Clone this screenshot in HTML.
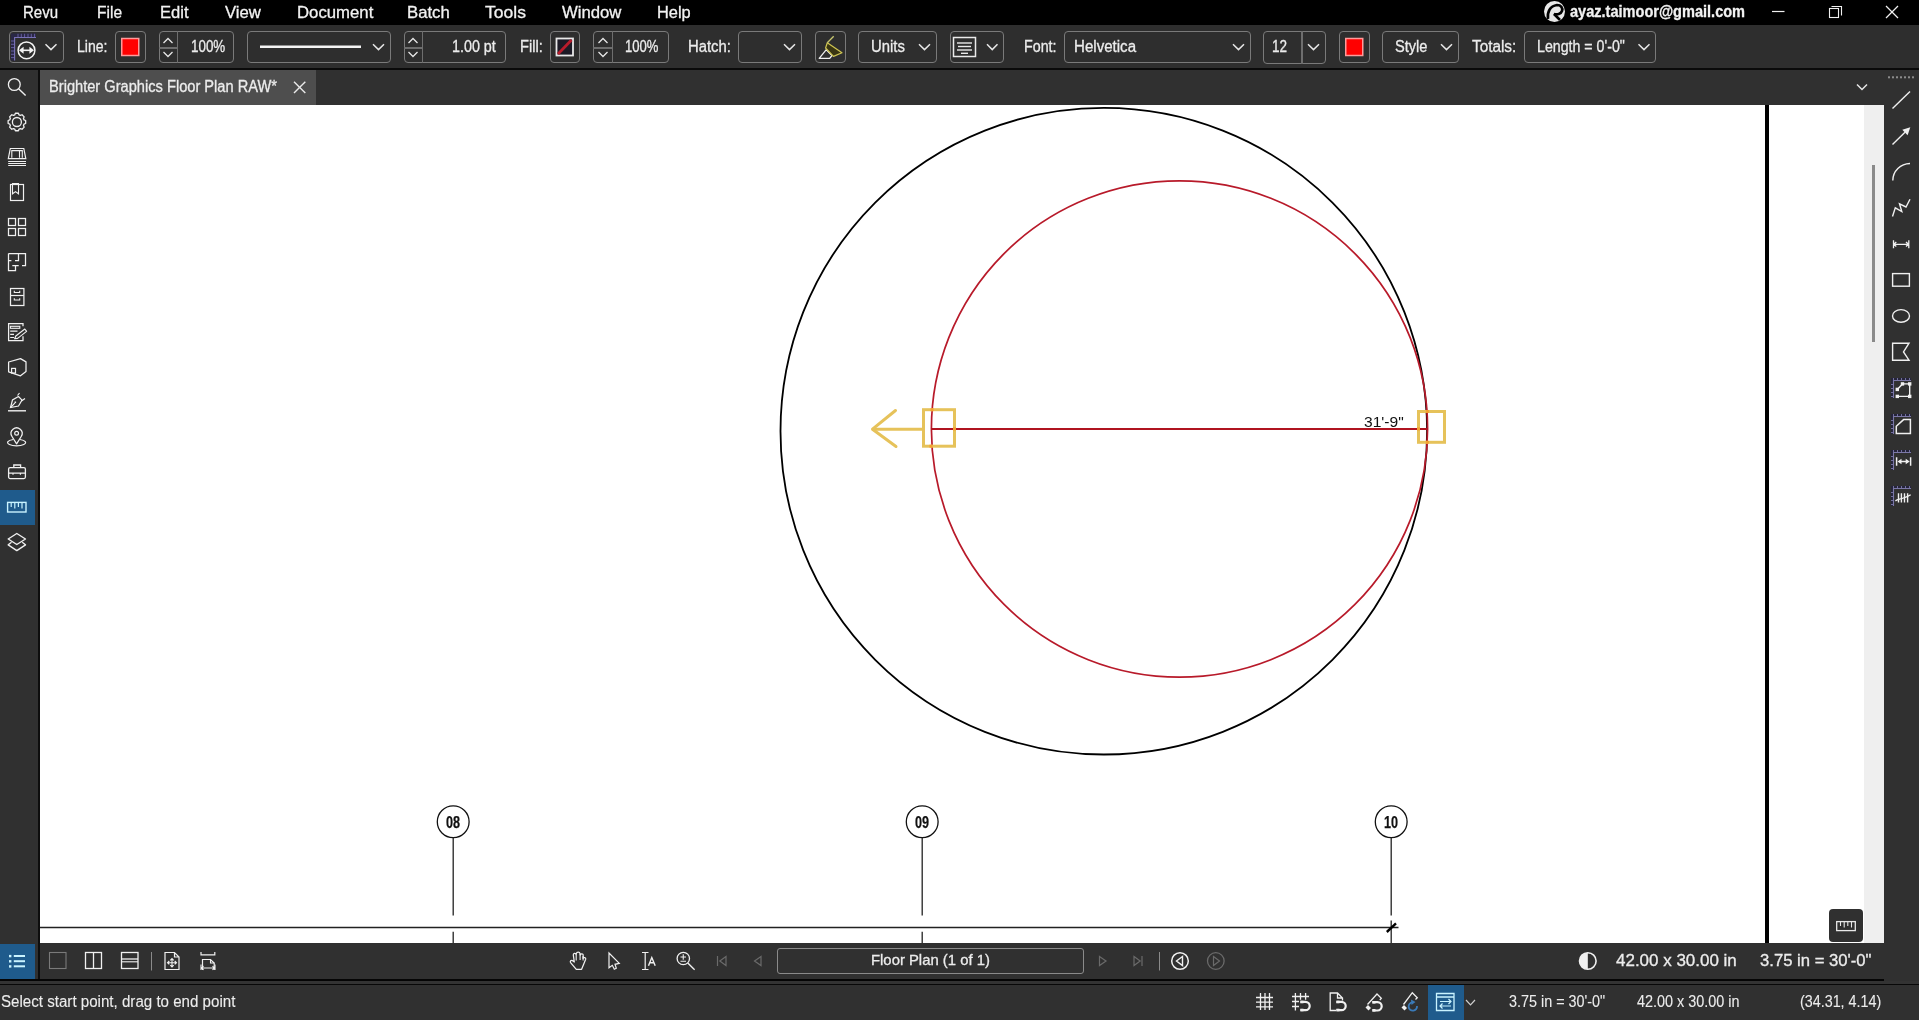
<!DOCTYPE html>
<html><head><meta charset="utf-8"><style>
html,body{margin:0;padding:0;}
body{width:1919px;height:1020px;overflow:hidden;position:relative;background:#2d2d2d;font-family:"Liberation Sans",sans-serif;}
.r,.t,.box,.s{position:absolute;}
.t{white-space:nowrap;transform-origin:0 0;-webkit-text-stroke:0.3px currentColor;}
.box{box-sizing:border-box;border:1.5px solid #7a7a7a;border-radius:4px;}
.s{overflow:visible;}
</style></head><body>
<div class="r" style="left:0px;top:0px;width:1919px;height:25px;background:#000;"></div>
<div class="r" style="left:0px;top:25px;width:1919px;height:43px;background:#2e2e2e;"></div>
<div class="r" style="left:0px;top:68px;width:1919px;height:2px;background:#0a0a0a;"></div>
<div class="r" style="left:0px;top:70px;width:38px;height:915px;background:#303030;"></div>
<div class="r" style="left:38px;top:70px;width:2px;height:909px;background:#0d0d0d;"></div>
<div class="r" style="left:40px;top:70px;width:1844px;height:35px;background:#303030;"></div>
<div class="r" style="left:40px;top:70px;width:276px;height:34.6px;background:#4e4e4e;"></div>
<div class="r" style="left:40px;top:105px;width:1844px;height:838px;background:#ffffff;"></div>
<div class="r" style="left:1864px;top:105px;width:20px;height:838px;background:#efefef;"></div>
<div class="r" style="left:1872px;top:165px;width:3px;height:177px;background:#8a8a8a;"></div>
<div class="r" style="left:1765px;top:105px;width:4px;height:838px;background:#000;"></div>
<div class="r" style="left:1884px;top:70px;width:35px;height:915px;background:#303030;"></div>
<div class="r" style="left:40px;top:943px;width:1844px;height:36px;background:#303030;"></div>
<div class="r" style="left:0px;top:979px;width:1884px;height:2px;background:#050505;"></div>
<div class="r" style="left:0px;top:981px;width:1919px;height:3px;background:#333333;"></div>
<div class="r" style="left:0px;top:984px;width:1919px;height:1px;background:#080808;"></div>
<div class="r" style="left:0px;top:985px;width:1919px;height:35px;background:#303030;"></div>
<div class="t" style="left:23.40px;top:4.00px;font-size:17px;line-height:17px;color:#f2f2f2;transform:scaleX(0.8830) translateZ(0);">Revu</div>
<div class="t" style="left:96.60px;top:4.00px;font-size:17px;line-height:17px;color:#f2f2f2;transform:scaleX(0.9132) translateZ(0);">File</div>
<div class="t" style="left:159.50px;top:4.00px;font-size:17px;line-height:17px;color:#f2f2f2;transform:scaleX(0.9744) translateZ(0);">Edit</div>
<div class="t" style="left:225.00px;top:4.00px;font-size:17px;line-height:17px;color:#f2f2f2;transform:scaleX(0.9829) translateZ(0);">View</div>
<div class="t" style="left:296.50px;top:4.00px;font-size:17px;line-height:17px;color:#f2f2f2;transform:scaleX(0.9845) translateZ(0);">Document</div>
<div class="t" style="left:406.60px;top:4.00px;font-size:17px;line-height:17px;color:#f2f2f2;transform:scaleX(0.9839) translateZ(0);">Batch</div>
<div class="t" style="left:485.25px;top:4.00px;font-size:17px;line-height:17px;color:#f2f2f2;transform:scaleX(1.0314) translateZ(0);">Tools</div>
<div class="t" style="left:561.90px;top:4.00px;font-size:17px;line-height:17px;color:#f2f2f2;transform:scaleX(0.9831) translateZ(0);">Window</div>
<div class="t" style="left:656.50px;top:4.00px;font-size:17px;line-height:17px;color:#f2f2f2;transform:scaleX(0.9643) translateZ(0);">Help</div>
<div class="t" style="left:1570.00px;top:4.00px;font-size:16px;line-height:16px;font-weight:bold;color:#f2f2f2;transform:scaleX(0.9091) translateZ(0);">ayaz.taimoor@gmail.com</div>
<svg class="s" style="left:1540px;top:0px;" width="28" height="25" viewBox="1540 0 28 25"><circle cx="1554.5" cy="11.5" r="10.5" fill="#e8e8e8"/><path d="M1548 19 C1547 12 1550 6 1557 5 C1561 5 1563 8 1562 11 C1561 14 1557 15 1554 14 L1560 20" fill="none" stroke="#000" stroke-width="2.6"/></svg>
<svg class="s" style="left:1765px;top:0px;" width="154" height="25" viewBox="1765 0 154 25"><line x1="1772" y1="11.5" x2="1784.5" y2="11.5" stroke="#f0f0f0" stroke-width="1.2"/><rect x="1829.5" y="8.5" width="9" height="9" fill="none" stroke="#f0f0f0" stroke-width="1.1"/><polyline points="1831.5,6.5 1841.5,6.5 1841.5,15.5" fill="none" stroke="#f0f0f0" stroke-width="1.1"/><line x1="1886" y1="6" x2="1898" y2="18" stroke="#f0f0f0" stroke-width="1.3"/><line x1="1898" y1="6" x2="1886" y2="18" stroke="#f0f0f0" stroke-width="1.3"/></svg>
<div class="box" style="left:9px;top:31px;width:55px;height:32px;"></div>
<div class="box" style="left:114.5px;top:31px;width:31.0px;height:32px;"></div>
<div class="box" style="left:158.5px;top:31px;width:75.5px;height:32px;"></div>
<div class="box" style="left:247px;top:31px;width:144px;height:32px;"></div>
<div class="box" style="left:403.5px;top:31px;width:102.5px;height:32px;"></div>
<div class="box" style="left:549.5px;top:31px;width:30.5px;height:32px;"></div>
<div class="box" style="left:593px;top:31px;width:76px;height:32px;"></div>
<div class="box" style="left:738px;top:31px;width:64px;height:32px;"></div>
<div class="box" style="left:814.5px;top:31px;width:31.5px;height:32px;"></div>
<div class="box" style="left:858px;top:31px;width:78.5px;height:32px;"></div>
<div class="box" style="left:949.5px;top:31px;width:54.5px;height:32px;"></div>
<div class="box" style="left:1063.5px;top:31px;width:187.5px;height:32px;"></div>
<div class="box" style="left:1338.5px;top:31px;width:31.0px;height:32px;"></div>
<div class="box" style="left:1382px;top:31px;width:77px;height:32px;"></div>
<div class="box" style="left:1524px;top:31px;width:132px;height:32px;"></div>
<div class="box" style="left:1263px;top:30.5px;width:63px;height:33.0px;"></div>
<div class="r" style="left:176.75px;top:31px;width:1.5px;height:32px;background:#6e6e6e;"></div>
<div class="r" style="left:158.5px;top:47px;width:19.0px;height:1.5px;background:#6e6e6e;"></div>
<div class="r" style="left:421.75px;top:31px;width:1.5px;height:32px;background:#6e6e6e;"></div>
<div class="r" style="left:403.5px;top:47px;width:19.0px;height:1.5px;background:#6e6e6e;"></div>
<div class="r" style="left:611.75px;top:31px;width:1.5px;height:32px;background:#6e6e6e;"></div>
<div class="r" style="left:593px;top:47px;width:19.5px;height:1.5px;background:#6e6e6e;"></div>
<div class="r" style="left:1301.25px;top:30.5px;width:1.5px;height:33px;background:#6e6e6e;"></div>
<svg class="s" style="left:0px;top:25px;" width="1700" height="44" viewBox="0 25 1700 44"><polyline points="163.5,43 168.0,38.5 172.5,43" fill="none" stroke="#e6e6e6" stroke-width="1.3"/><polyline points="163.5,52 168.0,56.5 172.5,52" fill="none" stroke="#e6e6e6" stroke-width="1.3"/><polyline points="408.5,43 413.0,38.5 417.5,43" fill="none" stroke="#e6e6e6" stroke-width="1.3"/><polyline points="408.5,52 413.0,56.5 417.5,52" fill="none" stroke="#e6e6e6" stroke-width="1.3"/><polyline points="598.5,43 603.0,38.5 607.5,43" fill="none" stroke="#e6e6e6" stroke-width="1.3"/><polyline points="598.5,52 603.0,56.5 607.5,52" fill="none" stroke="#e6e6e6" stroke-width="1.3"/><polyline points="45.5,44.3 51.0,49.6 56.5,44.3" fill="none" stroke="#e6e6e6" stroke-width="1.5"/><polyline points="373,44.3 378.5,49.6 384,44.3" fill="none" stroke="#e6e6e6" stroke-width="1.5"/><polyline points="784,44.3 789.5,49.6 795,44.3" fill="none" stroke="#e6e6e6" stroke-width="1.5"/><polyline points="919,44.3 924.5,49.6 930,44.3" fill="none" stroke="#e6e6e6" stroke-width="1.5"/><polyline points="987,44.3 992.25,49.6 997.5,44.3" fill="none" stroke="#e6e6e6" stroke-width="1.5"/><polyline points="1233,44.3 1238.5,49.6 1244,44.3" fill="none" stroke="#e6e6e6" stroke-width="1.5"/><polyline points="1308,44.3 1313.5,49.6 1319,44.3" fill="none" stroke="#e6e6e6" stroke-width="1.5"/><polyline points="1441,44.3 1446.5,49.6 1452,44.3" fill="none" stroke="#e6e6e6" stroke-width="1.5"/><polyline points="1638.5,44.3 1644.0,49.6 1649.5,44.3" fill="none" stroke="#e6e6e6" stroke-width="1.5"/><line x1="260" y1="46.8" x2="361" y2="46.8" stroke="#f4f4f4" stroke-width="2.6"/><rect x="121.75" y="38.5" width="17" height="17" fill="#ff0000" stroke="#ff9a9a" stroke-width="1.5"/><rect x="1345.75" y="38.5" width="17" height="17" fill="#ff0000" stroke="#ff9a9a" stroke-width="1.5"/><rect x="556.5" y="38.5" width="16.5" height="17" fill="#1c1a26" stroke="#e8e8e8" stroke-width="1.8"/><line x1="558" y1="54" x2="571.5" y2="40" stroke="#b81c2c" stroke-width="2.8"/><rect x="953.5" y="37.5" width="22" height="19" fill="none" stroke="#eaeaea" stroke-width="1.5"/><line x1="957" y1="43" x2="972" y2="43" stroke="#eaeaea" stroke-width="1.4"/><line x1="958" y1="46.5" x2="971" y2="46.5" stroke="#eaeaea" stroke-width="1.4"/><line x1="957" y1="50" x2="972" y2="50" stroke="#eaeaea" stroke-width="1.4"/><line x1="961" y1="53.3" x2="968" y2="53.3" stroke="#eaeaea" stroke-width="1.4"/><path d="M819.2 58.3 L826.3 49.7 L832 55.5 L829.7 58.3 Z" fill="none" stroke="#f0f0f0" stroke-width="1.3" stroke-linejoin="round"/><path d="M827.3 42.7 L842 52.7 L833.5 56.4 L825.6 48 Z" fill="#3a3612" stroke="#cfc552" stroke-width="1.2" stroke-linejoin="round"/><line x1="827.3" y1="42.7" x2="833.7" y2="36.3" stroke="#c8c870" stroke-width="1.3"/><path d="M11 33.5 H36 V37.5 H14.6 V60.5 H11 Z" fill="#2a2846"/><line x1="18" y1="33.8" x2="18" y2="37.5" stroke="#6a62a8" stroke-width="0.9"/><line x1="21.3" y1="33.8" x2="21.3" y2="37.5" stroke="#6a62a8" stroke-width="0.9"/><line x1="24.6" y1="33.8" x2="24.6" y2="37.5" stroke="#6a62a8" stroke-width="0.9"/><line x1="28" y1="33.8" x2="28" y2="37.5" stroke="#6a62a8" stroke-width="0.9"/><line x1="31.3" y1="33.8" x2="31.3" y2="37.5" stroke="#6a62a8" stroke-width="0.9"/><line x1="34.6" y1="33.8" x2="34.6" y2="37.5" stroke="#6a62a8" stroke-width="0.9"/><line x1="11" y1="41" x2="14.6" y2="41" stroke="#6a62a8" stroke-width="0.9"/><line x1="11" y1="44.3" x2="14.6" y2="44.3" stroke="#6a62a8" stroke-width="0.9"/><line x1="11" y1="47.6" x2="14.6" y2="47.6" stroke="#6a62a8" stroke-width="0.9"/><line x1="11" y1="51" x2="14.6" y2="51" stroke="#6a62a8" stroke-width="0.9"/><line x1="11" y1="54.3" x2="14.6" y2="54.3" stroke="#6a62a8" stroke-width="0.9"/><line x1="11" y1="57.6" x2="14.6" y2="57.6" stroke="#6a62a8" stroke-width="0.9"/><polyline points="14.6,60.5 14.6,37.5 36,37.5" fill="none" stroke="#7a72b8" stroke-width="1.1"/><circle cx="26.5" cy="50.3" r="8.4" fill="none" stroke="#f4f4f4" stroke-width="1.5"/><line x1="21" y1="50.3" x2="32" y2="50.3" stroke="#f4f4f4" stroke-width="1.6"/><path d="M19 50.3 L23.6 46.8 L23.6 53.8 Z M34 50.3 L29.4 46.8 L29.4 53.8 Z" fill="#f4f4f4"/></svg>
<div class="t" style="left:76.70px;top:39.00px;font-size:16px;line-height:16px;color:#ececec;transform:scaleX(0.8777) translateZ(0);">Line:</div>
<div class="t" style="left:190.50px;top:39.00px;font-size:16px;line-height:16px;color:#ececec;transform:scaleX(0.8367) translateZ(0);">100%</div>
<div class="t" style="left:452.00px;top:39.00px;font-size:16px;line-height:16px;color:#ececec;transform:scaleX(0.8941) translateZ(0);">1.00 pt</div>
<div class="t" style="left:519.60px;top:39.00px;font-size:16px;line-height:16px;color:#ececec;transform:scaleX(0.9126) translateZ(0);">Fill:</div>
<div class="t" style="left:625.00px;top:39.00px;font-size:16px;line-height:16px;color:#ececec;transform:scaleX(0.8171) translateZ(0);">100%</div>
<div class="t" style="left:688.40px;top:39.00px;font-size:16px;line-height:16px;color:#ececec;transform:scaleX(0.9276) translateZ(0);">Hatch:</div>
<div class="t" style="left:871.40px;top:39.00px;font-size:16px;line-height:16px;color:#ececec;transform:scaleX(0.9288) translateZ(0);">Units</div>
<div class="t" style="left:1023.70px;top:39.00px;font-size:16px;line-height:16px;color:#ececec;transform:scaleX(0.8904) translateZ(0);">Font:</div>
<div class="t" style="left:1073.60px;top:39.00px;font-size:16px;line-height:16px;color:#ececec;transform:scaleX(0.9427) translateZ(0);">Helvetica</div>
<div class="t" style="left:1272.00px;top:39.00px;font-size:16px;line-height:16px;color:#ececec;transform:scaleX(0.8451) translateZ(0);">12</div>
<div class="t" style="left:1395.30px;top:39.00px;font-size:16px;line-height:16px;color:#ececec;transform:scaleX(0.9123) translateZ(0);">Style</div>
<div class="t" style="left:1472.00px;top:39.00px;font-size:16px;line-height:16px;color:#ececec;transform:scaleX(0.9578) translateZ(0);">Totals:</div>
<div class="t" style="left:1536.60px;top:39.00px;font-size:16px;line-height:16px;color:#ececec;transform:scaleX(0.8869) translateZ(0);">Length = 0'-0&quot;</div>
<div class="t" style="left:49.00px;top:79.00px;font-size:16px;line-height:16px;color:#ececec;transform:scaleX(0.9147) translateZ(0);">Brighter Graphics Floor Plan RAW*</div>
<svg class="s" style="left:290px;top:78px;" width="20" height="20" viewBox="290 78 20 20"><line x1="294" y1="81.7" x2="305.3" y2="93" stroke="#eaeaea" stroke-width="1.4"/><line x1="305.3" y1="81.7" x2="294" y2="93" stroke="#eaeaea" stroke-width="1.4"/></svg>
<svg class="s" style="left:1850px;top:78px;" width="30" height="20" viewBox="1850 78 30 20"><polyline points="1857,84.5 1862.0,89.5 1867,84.5" fill="none" stroke="#e6e6e6" stroke-width="1.5"/></svg>
<svg class="s" style="left:1884px;top:70px;" width="35" height="15" viewBox="1884 70 35 15"><rect x="1888" y="76.3" width="2" height="2" fill="#8c8c8c"/><rect x="1892" y="76.3" width="2" height="2" fill="#8c8c8c"/><rect x="1896" y="76.3" width="2" height="2" fill="#8c8c8c"/><rect x="1900" y="76.3" width="2" height="2" fill="#8c8c8c"/><rect x="1904" y="76.3" width="2" height="2" fill="#8c8c8c"/><rect x="1908" y="76.3" width="2" height="2" fill="#8c8c8c"/><rect x="1912" y="76.3" width="2" height="2" fill="#8c8c8c"/></svg>
<div class="r" style="left:0px;top:490px;width:35px;height:35px;background:#1f5b8c;"></div>
<div class="r" style="left:0px;top:944px;width:35px;height:35px;background:#1f5b8c;"></div>
<svg class="s" style="left:0px;top:70px;" width="38" height="500" viewBox="0 70 38 500"><circle cx="14.3" cy="84.5" r="5.9" fill="none" stroke="#f0f0f0" stroke-width="1.3"/><line x1="18.6" y1="88.8" x2="25.6" y2="95.6" stroke="#f0f0f0" stroke-width="1.4"/><polygon points="14.71,114.93 15.39,113.23 18.41,113.23 19.09,114.93 20.35,115.45 22.04,114.73 24.17,116.86 23.45,118.55 23.97,119.81 25.67,120.49 25.67,123.51 23.97,124.19 23.45,125.45 24.17,127.14 22.04,129.27 20.35,128.55 19.09,129.07 18.41,130.77 15.39,130.77 14.71,129.07 13.45,128.55 11.76,129.27 9.63,127.14 10.35,125.45 9.83,124.19 8.13,123.51 8.13,120.49 9.83,119.81 10.35,118.55 9.63,116.86 11.76,114.73 13.45,115.45" fill="none" stroke="#f0f0f0" stroke-width="1.3" stroke-linejoin="round"/><circle cx="16.9" cy="122" r="4.5" fill="none" stroke="#f0f0f0" stroke-width="1.3"/><path d="M10.3 148.5 L23.8 148.5 L25.8 158.7 L8.3 158.7 Z" fill="none" stroke="#f0f0f0" stroke-width="1.2"/><path d="M11.8 157.8 L11.8 150.6 L22.3 150.6 L22.3 157.8 M19.5 150.6 L19.5 157.8" fill="none" stroke="#f0f0f0" stroke-width="1.1"/><path d="M8.2 161.5 H26 M8.2 163.5 H26 M8.2 165.5 H26" fill="none" stroke="#f0f0f0" stroke-width="1.0"/><rect x="10.5" y="184.5" width="13" height="16" fill="none" stroke="#f0f0f0" stroke-width="1.2"/><path d="M12.5 183.6 H18.5 V193.8 L15.5 191.6 L12.5 193.8 Z" fill="none" stroke="#f0f0f0" stroke-width="1.1"/><rect x="8.5" y="218.5" width="7" height="7" fill="none" stroke="#f0f0f0" stroke-width="1.25"/><rect x="8.5" y="228.5" width="7" height="7" fill="none" stroke="#f0f0f0" stroke-width="1.25"/><rect x="18.5" y="218.5" width="7" height="7" fill="none" stroke="#f0f0f0" stroke-width="1.25"/><rect x="18.5" y="228.5" width="7" height="7" fill="none" stroke="#f0f0f0" stroke-width="1.25"/><path d="M8.5 253.5 H25.5 V265.5 H22 M8.5 253.5 V270.5 H15.5 V265.5 M12.3 265.5 H18.7 M8.5 260.5 H11.4 M15 260.5 H18.5 V253.5" fill="none" stroke="#f0f0f0" stroke-width="1.25"/><rect x="10.5" y="288.5" width="13.4" height="17" fill="none" stroke="#f0f0f0" stroke-width="1.25"/><line x1="10.5" y1="295.5" x2="23.9" y2="295.5" stroke="#f0f0f0" stroke-width="1.2"/><path d="M14.3 290.8 V292.5 H19.7 V290.8 M14.3 298.3 V300 H19.7 V298.3" fill="none" stroke="#f0f0f0" stroke-width="1.1"/><path d="M23 326.2 V323.6 H8.6 V340.7 H23 V336.2" fill="none" stroke="#f0f0f0" stroke-width="1.25"/><rect x="10.4" y="326.3" width="9.4" height="2" fill="none" stroke="#f0f0f0" stroke-width="1.1"/><path d="M10.2 331.2 H17.5 M10.2 334.4 H14 M10.2 337.5 H14" fill="none" stroke="#f0f0f0" stroke-width="1.2"/><path d="M14.7 338.8 L17.6 338.4 L26.6 331.4 L24.8 329 L15.8 336 Z" fill="none" stroke="#f0f0f0" stroke-width="1.15" stroke-linejoin="round"/><path d="M8.6 362 L20.5 358.6 L26 361.9 V371.5 L20.5 375.8 L8.6 371.8 Z" fill="none" stroke="#f0f0f0" stroke-width="1.25" stroke-linejoin="round"/><rect x="11.6" y="368.4" width="3.9" height="4.6" fill="none" stroke="#f0f0f0" stroke-width="1.2"/><line x1="8" y1="410.8" x2="26" y2="410.8" stroke="#f0f0f0" stroke-width="1.4"/><path d="M10.5 407.5 L12.5 400 L18.5 396.5 L22 400 L18.5 406 Z" fill="none" stroke="#f0f0f0" stroke-width="1.2"/><path d="M17.5 395.5 L19.5 393 M21.5 401 L25 398.5 M10.5 407.5 L14.8 403.2" fill="none" stroke="#f0f0f0" stroke-width="1.2"/><rect x="14.5" y="401.5" width="1.6" height="1.6" fill="#f0f0f0"/><path d="M16.6 443.8 L12.0 436.5 A5.5 5.5 0 1 1 21.2 436.5 Z" fill="none" stroke="#f0f0f0" stroke-width="1.25" stroke-linejoin="round"/><circle cx="16.6" cy="433.3" r="1.9" fill="none" stroke="#f0f0f0" stroke-width="1.2"/><path d="M13.2 439.5 A9 3.3 0 1 0 20 439.5" fill="none" stroke="#f0f0f0" stroke-width="1.2"/><path d="M13.8 467.5 V465 H20.6 V467.5" fill="none" stroke="#f0f0f0" stroke-width="1.3"/><rect x="8.6" y="467.6" width="16.8" height="11" rx="1.5" fill="none" stroke="#f0f0f0" stroke-width="1.3"/><path d="M8.6 473.2 H13 V474.8 M13 473.2 H20.4 M20.4 474.8 V473.2 H25.4" fill="none" stroke="#f0f0f0" stroke-width="1.2"/><rect x="7.6" y="502.4" width="18.4" height="9.6" fill="none" stroke="#c9f3ff" stroke-width="1.4"/><line x1="11.2" y1="502.4" x2="11.2" y2="507" stroke="#c9f3ff" stroke-width="1.2"/><line x1="14.8" y1="502.4" x2="14.8" y2="508.5" stroke="#c9f3ff" stroke-width="1.2"/><line x1="18.4" y1="502.4" x2="18.4" y2="507" stroke="#c9f3ff" stroke-width="1.2"/><line x1="22" y1="502.4" x2="22" y2="508.5" stroke="#c9f3ff" stroke-width="1.2"/><path d="M16.8 533.5 L25.5 539 L16.8 544.5 L8.2 539 Z" fill="none" stroke="#f0f0f0" stroke-width="1.4" stroke-linejoin="round"/><path d="M11.5 542.3 L8.2 544.8 L16.8 550.6 L25.5 544.8 L22.2 542.3" fill="none" stroke="#f0f0f0" stroke-width="1.4" stroke-linejoin="round"/></svg>
<svg class="s" style="left:1884px;top:70px;" width="35" height="450" viewBox="1884 70 35 450"><line x1="1892.5" y1="108.5" x2="1910" y2="91.5" fill="none" stroke="#f0f0f0" stroke-width="1.4"/><line x1="1892.5" y1="144.5" x2="1905" y2="132.3" fill="none" stroke="#f0f0f0" stroke-width="1.4"/><path d="M1910.3 127.3 L1902.3 129.8 L1907.6 135.2 Z" fill="#f0f0f0"/><path d="M1892.8 180.6 A17.5 17.2 0 0 1 1910 163.5" fill="none" stroke="#f0f0f0" stroke-width="1.4"/><polyline points="1892.5,216.5 1895.3,207.8 1901.8,211.5 1899.5,203.8 1906,207 1910,199.3" fill="none" stroke="#f0f0f0" stroke-width="1.4" stroke-linejoin="miter"/><path d="M1893.5 240.3 V248.2 M1908.8 240.3 V248.2 M1893.5 244.3 H1908.8 M1896.3 242 L1893.8 244.3 L1896.3 246.6 M1906 242 L1908.5 244.3 L1906 246.6" fill="none" stroke="#f0f0f0" stroke-width="1.3"/><rect x="1892.6" y="273.6" width="16.8" height="12.6" fill="none" stroke="#f0f0f0" stroke-width="1.4"/><ellipse cx="1901" cy="315.9" rx="8.5" ry="6.3" fill="none" stroke="#f0f0f0" stroke-width="1.4"/><path d="M1892.6 343.2 H1909 L1903.5 352 L1909 360.2 H1892.6 Z" fill="none" stroke="#f0f0f0" stroke-width="1.4" stroke-linejoin="miter"/><path d="M1891 378.0 H1911 V380.5 H1893.5 V398.0 H1891 Z" fill="#25243a"/><line x1="1893.5" y1="378.0" x2="1893.5" y2="380.5" stroke="#7c78a8" stroke-width="0.9"/><line x1="1897.5" y1="378.0" x2="1897.5" y2="380.5" stroke="#7c78a8" stroke-width="0.9"/><line x1="1901.5" y1="378.0" x2="1901.5" y2="380.5" stroke="#7c78a8" stroke-width="0.9"/><line x1="1905.5" y1="378.0" x2="1905.5" y2="380.5" stroke="#7c78a8" stroke-width="0.9"/><line x1="1909.5" y1="378.0" x2="1909.5" y2="380.5" stroke="#7c78a8" stroke-width="0.9"/><line x1="1891" y1="384.5" x2="1893.5" y2="384.5" stroke="#7c78a8" stroke-width="0.9"/><line x1="1891" y1="388.5" x2="1893.5" y2="388.5" stroke="#7c78a8" stroke-width="0.9"/><line x1="1891" y1="392.5" x2="1893.5" y2="392.5" stroke="#7c78a8" stroke-width="0.9"/><line x1="1891" y1="396.5" x2="1893.5" y2="396.5" stroke="#7c78a8" stroke-width="0.9"/><polyline points="1893.5,398.0 1893.5,380.5 1911,380.5" fill="none" stroke="#7c78a8" stroke-width="1.1"/><polyline points="1897.3,389.4 1902.5,383.9 1909.7,383.9 1909.7,396.4 1897.3,396.4" fill="none" stroke="#f0f0f0" stroke-width="1.4"/><rect x="1895.6" y="387.7" width="3.4" height="3.4" fill="#f0f0f0"/><rect x="1900.8" y="382.2" width="3.4" height="3.4" fill="#f0f0f0"/><rect x="1908.0" y="382.2" width="3.4" height="3.4" fill="#f0f0f0"/><rect x="1908.0" y="394.7" width="3.4" height="3.4" fill="#f0f0f0"/><rect x="1895.6" y="394.7" width="3.4" height="3.4" fill="#f0f0f0"/><path d="M1891 414.0 H1911 V416.5 H1893.5 V434.0 H1891 Z" fill="#25243a"/><line x1="1893.5" y1="414.0" x2="1893.5" y2="416.5" stroke="#7c78a8" stroke-width="0.9"/><line x1="1897.5" y1="414.0" x2="1897.5" y2="416.5" stroke="#7c78a8" stroke-width="0.9"/><line x1="1901.5" y1="414.0" x2="1901.5" y2="416.5" stroke="#7c78a8" stroke-width="0.9"/><line x1="1905.5" y1="414.0" x2="1905.5" y2="416.5" stroke="#7c78a8" stroke-width="0.9"/><line x1="1909.5" y1="414.0" x2="1909.5" y2="416.5" stroke="#7c78a8" stroke-width="0.9"/><line x1="1891" y1="420.5" x2="1893.5" y2="420.5" stroke="#7c78a8" stroke-width="0.9"/><line x1="1891" y1="424.5" x2="1893.5" y2="424.5" stroke="#7c78a8" stroke-width="0.9"/><line x1="1891" y1="428.5" x2="1893.5" y2="428.5" stroke="#7c78a8" stroke-width="0.9"/><line x1="1891" y1="432.5" x2="1893.5" y2="432.5" stroke="#7c78a8" stroke-width="0.9"/><polyline points="1893.5,434.0 1893.5,416.5 1911,416.5" fill="none" stroke="#7c78a8" stroke-width="1.1"/><path d="M1896.3 433.6 V426.3 L1903.6 419.6 H1910.4 V433.6 Z" fill="none" stroke="#f0f0f0" stroke-width="1.5"/><path d="M1891 450.0 H1911 V452.5 H1893.5 V470.0 H1891 Z" fill="#25243a"/><line x1="1893.5" y1="450.0" x2="1893.5" y2="452.5" stroke="#7c78a8" stroke-width="0.9"/><line x1="1897.5" y1="450.0" x2="1897.5" y2="452.5" stroke="#7c78a8" stroke-width="0.9"/><line x1="1901.5" y1="450.0" x2="1901.5" y2="452.5" stroke="#7c78a8" stroke-width="0.9"/><line x1="1905.5" y1="450.0" x2="1905.5" y2="452.5" stroke="#7c78a8" stroke-width="0.9"/><line x1="1909.5" y1="450.0" x2="1909.5" y2="452.5" stroke="#7c78a8" stroke-width="0.9"/><line x1="1891" y1="456.5" x2="1893.5" y2="456.5" stroke="#7c78a8" stroke-width="0.9"/><line x1="1891" y1="460.5" x2="1893.5" y2="460.5" stroke="#7c78a8" stroke-width="0.9"/><line x1="1891" y1="464.5" x2="1893.5" y2="464.5" stroke="#7c78a8" stroke-width="0.9"/><line x1="1891" y1="468.5" x2="1893.5" y2="468.5" stroke="#7c78a8" stroke-width="0.9"/><polyline points="1893.5,470.0 1893.5,452.5 1911,452.5" fill="none" stroke="#7c78a8" stroke-width="1.1"/><path d="M1896.6 457.2 V465.8 M1910.6 457.2 V465.8 M1899 461.5 H1908" fill="none" stroke="#f0f0f0" stroke-width="1.5"/><path d="M1897.5 461.5 L1901.5 458.8 V464.2 Z M1909.7 461.5 L1905.7 458.8 V464.2 Z" fill="#f0f0f0"/><path d="M1891 486.0 H1911 V488.5 H1893.5 V506.0 H1891 Z" fill="#25243a"/><line x1="1893.5" y1="486.0" x2="1893.5" y2="488.5" stroke="#7c78a8" stroke-width="0.9"/><line x1="1897.5" y1="486.0" x2="1897.5" y2="488.5" stroke="#7c78a8" stroke-width="0.9"/><line x1="1901.5" y1="486.0" x2="1901.5" y2="488.5" stroke="#7c78a8" stroke-width="0.9"/><line x1="1905.5" y1="486.0" x2="1905.5" y2="488.5" stroke="#7c78a8" stroke-width="0.9"/><line x1="1909.5" y1="486.0" x2="1909.5" y2="488.5" stroke="#7c78a8" stroke-width="0.9"/><line x1="1891" y1="492.5" x2="1893.5" y2="492.5" stroke="#7c78a8" stroke-width="0.9"/><line x1="1891" y1="496.5" x2="1893.5" y2="496.5" stroke="#7c78a8" stroke-width="0.9"/><line x1="1891" y1="500.5" x2="1893.5" y2="500.5" stroke="#7c78a8" stroke-width="0.9"/><line x1="1891" y1="504.5" x2="1893.5" y2="504.5" stroke="#7c78a8" stroke-width="0.9"/><polyline points="1893.5,506.0 1893.5,488.5 1911,488.5" fill="none" stroke="#7c78a8" stroke-width="1.1"/><path d="M1898.5 493.2 V502.6 M1901.4 493.2 V502.6 M1904.5 493.2 V502.6 M1907.6 493.2 V502.6" fill="none" stroke="#f0f0f0" stroke-width="1.4"/><path d="M1895.4 500.9 C1897.5 499.5 1899 499.5 1902 498.5 C1905 497.5 1908 496.5 1910.7 494.7" fill="none" stroke="#f0f0f0" stroke-width="1.3"/></svg>
<svg class="s" style="left:40px;top:105px;" width="1844" height="838" viewBox="40 105 1844 838"><circle cx="1103.8" cy="431.2" r="323.3" fill="none" stroke="#000" stroke-width="1.8"/><circle cx="1179.5" cy="429" r="248.1" fill="none" stroke="#b81a2a" stroke-width="1.7"/><line x1="931" y1="428.9" x2="1427.6" y2="428.9" stroke="#b01420" stroke-width="2"/><line x1="873" y1="429.2" x2="922" y2="429.2" stroke="#e6c25a" stroke-width="3"/><polyline points="895.5,410.5 872.5,429.2 896,446.5" fill="none" stroke="#e6c25a" stroke-width="3" stroke-linejoin="round" stroke-linecap="round"/><rect x="923.5" y="409.7" width="31" height="36.5" fill="none" stroke="#e6c25a" stroke-width="3"/><rect x="1418.5" y="411.5" width="26" height="30.8" fill="none" stroke="#e6c25a" stroke-width="3"/><rect x="930.5" y="408.2" width="3" height="3" fill="#f5a030"/><rect x="929.5" y="444.7" width="3" height="3" fill="#f5a030"/><rect x="953.0" y="427.4" width="3" height="3" fill="#f5a030"/><rect x="1417.0" y="427.4" width="3" height="3" fill="#f5a030"/><rect x="1425.8" y="410.0" width="3" height="3" fill="#f5a030"/><rect x="1425.8" y="440.8" width="3" height="3" fill="#f5a030"/><circle cx="453.2" cy="821.7" r="15.9" fill="none" stroke="#111" stroke-width="1.3"/><line x1="453.2" y1="837.6" x2="453.2" y2="915.6" stroke="#222" stroke-width="1.3"/><line x1="453.2" y1="931.8" x2="453.2" y2="943" stroke="#222" stroke-width="1.3"/><circle cx="922.2" cy="821.7" r="15.9" fill="none" stroke="#111" stroke-width="1.3"/><line x1="922.2" y1="837.6" x2="922.2" y2="915.6" stroke="#222" stroke-width="1.3"/><line x1="922.2" y1="931.8" x2="922.2" y2="943" stroke="#222" stroke-width="1.3"/><circle cx="1391.2" cy="821.7" r="15.9" fill="none" stroke="#111" stroke-width="1.3"/><line x1="1391.2" y1="837.6" x2="1391.2" y2="915.6" stroke="#222" stroke-width="1.3"/><line x1="1391.2" y1="920.4" x2="1391.2" y2="943" stroke="#222" stroke-width="1.3"/><line x1="40" y1="927.6" x2="1398.5" y2="927.6" stroke="#222" stroke-width="1.5"/><line x1="1386.8" y1="932" x2="1396" y2="923.4" stroke="#000" stroke-width="2.4"/></svg>
<div class="t" style="left:446.20px;top:815.00px;font-size:16px;line-height:16px;font-weight:bold;color:#111;transform:scaleX(0.7887) translateZ(0);-webkit-text-stroke:0.25px #111;">08</div>
<div class="t" style="left:915.20px;top:815.00px;font-size:16px;line-height:16px;font-weight:bold;color:#111;transform:scaleX(0.7887) translateZ(0);-webkit-text-stroke:0.25px #111;">09</div>
<div class="t" style="left:1384.20px;top:815.00px;font-size:16px;line-height:16px;font-weight:bold;color:#111;transform:scaleX(0.7887) translateZ(0);-webkit-text-stroke:0.25px #111;">10</div>
<div class="t" style="left:1363.50px;top:415.00px;font-size:14px;line-height:14px;color:#111;transform:scaleX(1.1144) translateZ(0);-webkit-text-stroke:0;">31'-9&quot;</div>
<div class="r" style="left:1829px;top:909px;width:34px;height:33px;background:#303030;border-radius:4px;"></div>
<svg class="s" style="left:1829px;top:909px;" width="34" height="33" viewBox="1829 909 34 33"><rect x="1836.7" y="921.6" width="18.6" height="9" fill="none" stroke="#e8e8e8" stroke-width="1.3"/><line x1="1840.5" y1="921.6" x2="1840.5" y2="926" stroke="#e8e8e8" stroke-width="1.1"/><line x1="1844.2" y1="921.6" x2="1844.2" y2="927.5" stroke="#e8e8e8" stroke-width="1.1"/><line x1="1847.8" y1="921.6" x2="1847.8" y2="926" stroke="#e8e8e8" stroke-width="1.1"/><line x1="1851.5" y1="921.6" x2="1851.5" y2="927.5" stroke="#e8e8e8" stroke-width="1.1"/></svg>
<svg class="s" style="left:0px;top:943px;" width="1884" height="36" viewBox="0 943 1884 36"><rect x="9" y="954.9" width="2.4" height="2.4" fill="#c9f3ff"/><line x1="13.8" y1="956" x2="25" y2="956" stroke="#c9f3ff" stroke-width="2"/><rect x="9" y="960.1" width="2.4" height="2.4" fill="#c9f3ff"/><line x1="13.8" y1="961.2" x2="25" y2="961.2" stroke="#c9f3ff" stroke-width="2"/><rect x="9" y="965.1999999999999" width="2.4" height="2.4" fill="#c9f3ff"/><line x1="13.8" y1="966.3" x2="25" y2="966.3" stroke="#c9f3ff" stroke-width="2"/><rect x="49.5" y="952.5" width="16.5" height="16" fill="none" stroke="#7a7a7a" stroke-width="1.1"/><rect x="85.5" y="952.5" width="16" height="16" fill="none" stroke="#f0f0f0" stroke-width="1.3"/><line x1="93.5" y1="952.5" x2="93.5" y2="968.5" stroke="#f0f0f0" stroke-width="1.3"/><rect x="121.5" y="952.5" width="16.5" height="16" fill="none" stroke="#f0f0f0" stroke-width="1.3"/><line x1="121.5" y1="959" x2="138" y2="959" stroke="#f0f0f0" stroke-width="1.3"/><line x1="121.5" y1="961.8" x2="138" y2="961.8" stroke="#f0f0f0" stroke-width="1.1"/><line x1="151.5" y1="952" x2="151.5" y2="970.5" stroke="#8a8a8a" stroke-width="1"/><path d="M165 952.5 H174.5 L179 957 V969.5 H165 Z M174.5 952.5 V957 H179" fill="none" stroke="#f0f0f0" stroke-width="1.2"/><path d="M172 958.5 V967 M167.5 962.7 H176.5 M170.3 960.3 L172 958.5 L173.7 960.3 M170.3 965.2 L172 967 L173.7 965.2 M169.3 961 L167.5 962.7 L169.3 964.4 M174.7 961 L176.5 962.7 L174.7 964.4" fill="none" stroke="#f0f0f0" stroke-width="1.1"/><path d="M201 952 V954.8 H214.8 V952 M202.5 970 V959.5 H210.5 L214.2 963 V970" fill="none" stroke="#f0f0f0" stroke-width="1.2"/><path d="M210.5 959.5 V963 H214.2 M201 964.5 V970 M215 964.5 V970 M201 968 H215 M203.5 966.2 L201.5 968 L203.5 969.8 M212.5 966.2 L214.5 968 L212.5 969.8" fill="none" stroke="#f0f0f0" stroke-width="1.1"/><path d="M576.3 969.3 L570.6 962.6 C569.8 961.5 570.8 959.8 572.3 960.6 L574.3 962 L573.3 955 C573.1 953 575.8 952.6 576.2 954.5 L576.4 953.5 C576.6 951.5 579.8 951.5 580 953.5 L580.3 955 C580.8 953.3 583.5 953.8 583.2 955.6 L583 958.3 C583.8 957 586.2 957.6 585.7 959.3 L581.6 969.3 Z" fill="none" stroke="#f0f0f0" stroke-width="1.25" stroke-linejoin="round"/><path d="M576.2 954.5 V960.5 M580.1 953.5 V960 M583.1 956 V960.5" fill="none" stroke="#f0f0f0" stroke-width="1.1"/><path d="M609 953 L609 967.7 L612.3 965.3 L614.3 969.3 L616.3 968.3 L615 964.3 L619.3 963.3 Z" fill="none" stroke="#f0f0f0" stroke-width="1.2" stroke-linejoin="miter"/><path d="M642 952.5 H648.5 M645.2 952.5 V969.5 M642 969.5 H648.5" fill="none" stroke="#f0f0f0" stroke-width="1.2"/><path d="M648.5 965.8 L651.8 957.5 L655.2 965.8 M649.8 962.8 H653.8" fill="none" stroke="#f0f0f0" stroke-width="1.4"/><circle cx="683.3" cy="958.5" r="6.2" fill="none" stroke="#f0f0f0" stroke-width="1.3"/><line x1="687.8" y1="963" x2="694.6" y2="969.8" stroke="#f0f0f0" stroke-width="1.4"/><path d="M680.5 957 H686 M683.25 954.3 V959.7 M680.5 961.3 H686" fill="none" stroke="#f0f0f0" stroke-width="1.1"/><path d="M717.5 956 V966 M726 956.5 L719.8 961 L726 965.5 Z" fill="none" stroke="#6a6a6a" stroke-width="1.2"/><path d="M761 956.5 L754.5 961 L761 965.5 Z" fill="none" stroke="#6a6a6a" stroke-width="1.2"/><path d="M1099.5 956.5 L1106 961 L1099.5 965.5 Z" fill="none" stroke="#6a6a6a" stroke-width="1.2"/><path d="M1142 956 V966 M1134 956.5 L1140.2 961 L1134 965.5 Z" fill="none" stroke="#6a6a6a" stroke-width="1.2"/><line x1="1159.5" y1="952" x2="1159.5" y2="970.5" stroke="#8a8a8a" stroke-width="1"/><circle cx="1180" cy="961" r="8.3" fill="none" stroke="#f0f0f0" stroke-width="1.5"/><path d="M1182.5 956.5 L1176.5 961 L1182.5 965.5 Z" fill="none" stroke="#f0f0f0" stroke-width="1.4"/><circle cx="1215.8" cy="961" r="8.3" fill="none" stroke="#6a6a6a" stroke-width="1.3"/><path d="M1213.5 956.5 L1219.5 961 L1213.5 965.5 Z" fill="none" stroke="#6a6a6a" stroke-width="1.2"/><circle cx="1587.8" cy="961" r="8.3" fill="none" stroke="#f0f0f0" stroke-width="1.6"/><path d="M1587.8 952.7 A8.3 8.3 0 0 0 1587.8 969.3 Z" fill="#f0f0f0"/></svg>
<div class="box" style="left:777px;top:948px;width:307px;height:26px;border-color:#8a8a8a;border-radius:3px;"></div>
<div class="t" style="left:870.60px;top:952.00px;font-size:15px;line-height:15px;color:#ececec;transform:scaleX(0.9900) translateZ(0);">Floor Plan (1 of 1)</div>
<div class="t" style="left:1616.00px;top:953.00px;font-size:16px;line-height:16px;color:#ececec;transform:scaleX(1.0608) translateZ(0);">42.00 x 30.00 in</div>
<div class="t" style="left:1760.00px;top:953.00px;font-size:16px;line-height:16px;color:#ececec;transform:scaleX(1.0421) translateZ(0);">3.75 in = 30'-0&quot;</div>
<div class="r" style="left:1428px;top:985px;width:36px;height:35px;background:#1f5b8c;"></div>
<svg class="s" style="left:1240px;top:985px;" width="250" height="35" viewBox="1240 985 250 35"><path d="M1256 997.5 H1273 M1256 1002.2 H1273 M1256 1006.8 H1273 M1260.5 993 V1010 M1265 993 V1010 M1269.5 993 V1010" fill="none" stroke="#f0f0f0" stroke-width="1.3"/><path d="M1292 996.5 H1309 M1292 1001.5 H1299 M1292 1006.5 H1299 M1295.4 993 V1010.5 M1300.5 993 V999.8 M1305.6 993 V999.8" fill="none" stroke="#f0f0f0" stroke-width="1.3"/><path d="M1300.5 1001.8 H1305.5 A4.2 4.2 0 0 1 1305.5 1010.2 H1300.5" fill="none" stroke="#f0f0f0" stroke-width="2.2"/><path d="M1303.7 1006 H1305.5" stroke="#303030" stroke-width="1"/><rect x="1300.3" y="1000.7" width="3.2" height="2.6" fill="#f0f0f0"/><rect x="1300.3" y="1008.7" width="3.2" height="2.6" fill="#f0f0f0"/><path d="M1336 1010.5 H1330.2 V993 H1337.5 L1342.5 998 V1000.5 M1337.5 993 V998 H1342.5" fill="none" stroke="#f0f0f0" stroke-width="1.3"/><path d="M1336.5 1001.8 H1341.5 A4.2 4.2 0 0 1 1341.5 1010.2 H1336.5" fill="none" stroke="#f0f0f0" stroke-width="2.2"/><path d="M1339.7 1006 H1341.5" stroke="#303030" stroke-width="1"/><rect x="1336.3" y="1000.7" width="3.2" height="2.6" fill="#f0f0f0"/><rect x="1336.3" y="1008.7" width="3.2" height="2.6" fill="#f0f0f0"/><path d="M1367.5 1004.5 L1377 994 L1381.3 998.3 L1379.8 1000" fill="none" stroke="#f0f0f0" stroke-width="1.3"/><path d="M1365.5 1007.5 L1368 1005 L1371 1008 L1368.5 1010.5 Z" fill="#f0f0f0"/><path d="M1372.5 1002.0999999999999 H1377.5 A4.2 4.2 0 0 1 1377.5 1010.5 H1372.5" fill="none" stroke="#f0f0f0" stroke-width="2.2"/><path d="M1375.7 1006.3 H1377.5" stroke="#303030" stroke-width="1"/><rect x="1372.3" y="1001.0" width="3.2" height="2.6" fill="#f0f0f0"/><rect x="1372.3" y="1009.0" width="3.2" height="2.6" fill="#f0f0f0"/><path d="M1403.5 1004.5 L1412.3 992.7 L1417.3 997.7 L1415.5 999.5" fill="none" stroke="#f0f0f0" stroke-width="1.3"/><path d="M1401.5 1007.5 L1404 1005 L1407 1008 L1404.5 1010.5 Z" fill="#f0f0f0"/><path d="M1417 1006 A4.2 4.2 0 1 1 1412.5 1002.3" fill="none" stroke="#3a7ab8" stroke-width="1.8"/><path d="M1411 999.5 L1415.5 1002 L1411.5 1005 Z" fill="#3a7ab8"/><path d="M1436.5 993.5 H1454 V1010.5 H1436.5 Z M1436.5 997 H1454" fill="none" stroke="#c9f3ff" stroke-width="1.3"/><path d="M1440 1001.5 H1451 M1448.5 999 L1451 1001.5 L1448.5 1004 M1451 1006 H1440 M1442.5 1003.5 L1440 1006 L1442.5 1008.5" fill="none" stroke="#c9f3ff" stroke-width="1.2"/><polyline points="1466,1000 1470.5,1004.8 1475,1000" fill="none" stroke="#cfcfcf" stroke-width="1.2"/></svg>
<div class="t" style="left:1.25px;top:994.00px;font-size:16px;line-height:16px;color:#ececec;transform:scaleX(0.9445) translateZ(0);-webkit-text-stroke:0.1px #ececec;">Select start point, drag to end point</div>
<div class="t" style="left:1509.30px;top:994.00px;font-size:16px;line-height:16px;color:#ececec;transform:scaleX(0.8981) translateZ(0);-webkit-text-stroke:0.1px #ececec;">3.75 in = 30'-0&quot;</div>
<div class="t" style="left:1637.40px;top:994.00px;font-size:16px;line-height:16px;color:#ececec;transform:scaleX(0.9010) translateZ(0);-webkit-text-stroke:0.1px #ececec;">42.00 x 30.00 in</div>
<div class="t" style="left:1800.30px;top:994.00px;font-size:16px;line-height:16px;color:#ececec;transform:scaleX(0.8948) translateZ(0);-webkit-text-stroke:0.1px #ececec;">(34.31, 4.14)</div>
</body></html>
